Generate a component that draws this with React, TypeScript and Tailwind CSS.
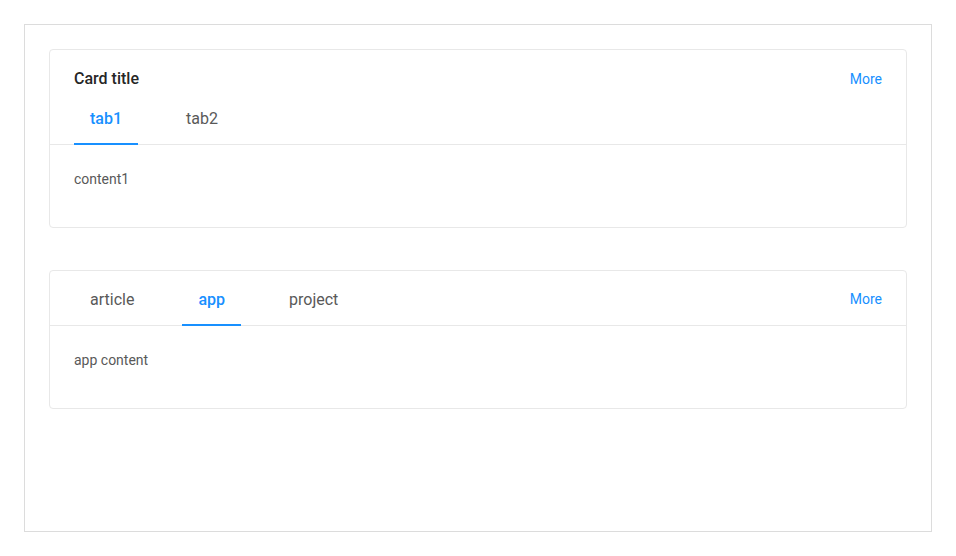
import React from 'react';

type TabItem = { key: string; label: string };

function TabBar({ tabs, active, onChange }: { tabs: TabItem[]; active: string; onChange: (k: string) => void }) {
  return (
    <div className="flex gap-8">
      {tabs.map((t) => (
        <button
          key={t.key}
          onClick={() => onChange(t.key)}
          className={
            'relative px-4 pt-[17px] pb-[13px] text-[16px] leading-6 cursor-pointer ' +
            (t.key === active ? 'text-[#1890ff] font-medium' : 'text-[#595959]')
          }
        >
          {t.label}
          {t.key === active && <span className="absolute left-0 right-0 -bottom-px h-[2px] bg-[#1890ff]" />}
        </button>
      ))}
    </div>
  );
}

function App() {
  const [tab1, setTab1] = React.useState('tab1');
  const [tab2, setTab2] = React.useState('app');

  const first: Record<string, string> = { tab1: 'content1', tab2: 'content2' };
  const second: Record<string, string> = {
    article: 'article content',
    app: 'app content',
    project: 'project content',
  };

  return (
    <div className="p-6 bg-white" style={{ fontFamily: 'Roboto, "Liberation Sans", sans-serif' }}>
      <div className="h-[508px] border border-[#dcdcdc] p-6">
        <div className="border border-[#e8e8e8] rounded-sm">
          <div className="px-6 border-b border-[#e8e8e8]">
            <div className="flex items-center justify-between pt-[17px] -mb-px">
              <div className="text-[16px] leading-6 font-medium text-[#262626]">Card title</div>
              <a href="#" className="text-[14px] leading-[22px] text-[#1890ff]">More</a>
            </div>
            <TabBar
              tabs={[
                { key: 'tab1', label: 'tab1' },
                { key: 'tab2', label: 'tab2' },
              ]}
              active={tab1}
              onChange={setTab1}
            />
          </div>
          <div className="px-6 pt-[23px] pb-[37px] text-[14px] leading-[22px] text-[#595959]">{first[tab1]}</div>
        </div>

        <div className="mt-[42px] border border-[#e8e8e8] rounded-sm">
          <div className="px-6 border-b border-[#e8e8e8] flex items-center justify-between">
            <TabBar
              tabs={[
                { key: 'article', label: 'article' },
                { key: 'app', label: 'app' },
                { key: 'project', label: 'project' },
              ]}
              active={tab2}
              onChange={setTab2}
            />
            <a href="#" className="text-[14px] leading-[22px] text-[#1890ff] mt-0.5">More</a>
          </div>
          <div className="px-6 pt-[23px] pb-[37px] text-[14px] leading-[22px] text-[#595959]">{second[tab2]}</div>
        </div>
      </div>
    </div>
  );
}

export default App;
